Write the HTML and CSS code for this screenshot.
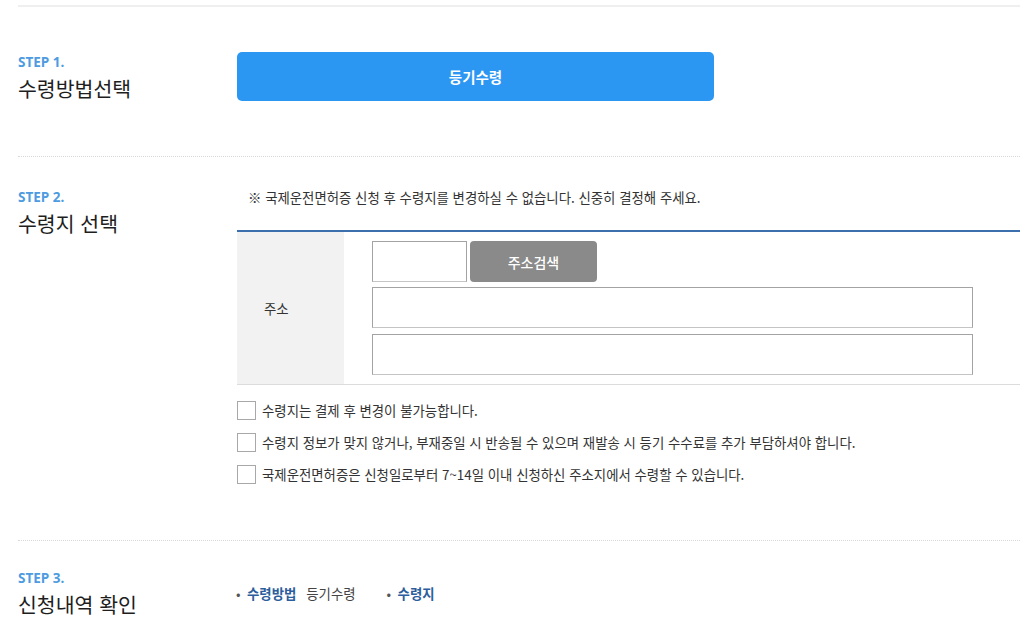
FILE: index.html
```html
<!DOCTYPE html>
<html lang="ko">
<head>
<meta charset="utf-8">
<title>국제운전면허증 신청</title>
<link rel="stylesheet" href="styles.css">
</head>
<body>
<div class="page">
  <section class="step step-first">
    <div class="step-head">
      <div class="step-no">STEP 1.</div>
      <h2 class="step-title">수령방법선택</h2>
    </div>
    <div class="step-body">
      <button class="method-btn" type="button">등기수령</button>
    </div>
  </section>

  <section class="step step-second">
    <div class="step-head">
      <div class="step-no">STEP 2.</div>
      <h2 class="step-title">수령지 선택</h2>
    </div>
    <div class="step-body">
      <p class="notice">※ 국제운전면허증 신청 후 수령지를 변경하실 수 없습니다. 신중히 결정해 주세요.</p>
      <div class="addr-table">
        <div class="addr-label">주소</div>
        <div class="addr-fields">
          <div class="zip-row">
            <input class="input zip" type="text">
            <button class="search-btn" type="button">주소검색</button>
          </div>
          <input class="input wide" type="text">
          <input class="input wide" type="text">
        </div>
      </div>
      <ul class="agree-list">
        <li class="agree"><span class="box"></span>수령지는 결제 후 변경이 불가능합니다.</li>
        <li class="agree"><span class="box"></span>수령지 정보가 맞지 않거나, 부재중일 시 반송될 수 있으며 재발송 시 등기 수수료를 추가 부담하셔야 합니다.</li>
        <li class="agree"><span class="box"></span>국제운전면허증은 신청일로부터 7~14일 이내 신청하신 주소지에서 수령할 수 있습니다.</li>
      </ul>
    </div>
  </section>

  <section class="step step-third">
    <div class="step-head">
      <div class="step-no">STEP 3.</div>
      <h2 class="step-title">신청내역 확인</h2>
    </div>
    <div class="step-body summary-body">
      <ul class="summary">
        <li class="summary-item"><span class="bullet">•</span><strong class="s-key">수령방법</strong><span class="s-val">등기수령</span></li>
        <li class="summary-item"><span class="bullet">•</span><strong class="s-key">수령지</strong></li>
      </ul>
    </div>
  </section>
</div>
</body>
</html>
```

FILE: styles.css
```css
* { box-sizing: border-box; }
html, body { margin: 0; padding: 0; background: #fff; }
body {
  font-family: "Noto Sans CJK KR", "Noto Sans", sans-serif;
  color: #333;
  width: 1024px;
  height: 638px;
  overflow: hidden;
}
.page {
  padding: 5px 4px 0 18px;
}
.step {
  display: flex;
}
.step-first {
  border-top: 2px solid #efefef;
  padding: 45px 0 55px;
  border-bottom: 1px dotted #d8d8d8;
}
.step-second {
  padding: 32px 0 50px;
  border-bottom: 1px dotted #d8d8d8;
}
.step-third {
  padding: 29px 0 0;
}
.step-head {
  width: 219px;
  flex: none;
}
.step-first .step-head { padding-top: 2px; }
.step-no {
  font-family: "Open Sans", "Noto Sans", sans-serif;
  font-weight: 700;
  font-size: 13.5px;
  line-height: 16px;
  color: #4d9be0;
}
.step-title {
  margin: 5px 0 0;
  font-size: 20.5px;
  line-height: 26px;
  font-weight: 400;
  color: #1e1e1e;
}
.step-body { flex: 1; }

.method-btn {
  display: block;
  width: 477px;
  height: 49px;
  border: 0;
  border-radius: 5px;
  background: #2c96f3;
  color: #fff;
  font-family: inherit;
  font-size: 14.5px;
  font-weight: 700;
  cursor: pointer;
}

.notice {
  margin: 0 0 25px 11px;
  font-size: 13.4px;
  line-height: 16px;
  color: #333;
}
.addr-table {
  display: flex;
  border-top: 2px solid #3b6fae;
  border-bottom: 1px solid #dcdcdc;
}
.addr-label {
  width: 107px;
  flex: none;
  background: #f2f2f2;
  padding-left: 27px;
  display: flex;
  align-items: center;
  font-size: 13.4px;
  color: #333;
}
.addr-fields {
  padding: 9px 0 9px 28px;
  display: flex;
  flex-direction: column;
  gap: 5px;
}
.zip-row {
  display: flex;
  gap: 3px;
}
.input {
  display: block;
  height: 41px;
  border: 1px solid #a3a3a3;
  border-bottom-color: #c4c4c4;
  background: #fff;
  margin: 0;
  padding: 0 8px;
  font-family: inherit;
}
.zip { width: 95px; }
.wide { width: 601px; }
.wide + .wide { margin-top: 1px; }
.search-btn {
  width: 127px;
  height: 41px;
  border: 0;
  border-radius: 4px;
  background: #8a8a8a;
  color: #fff;
  font-family: inherit;
  font-size: 14px;
  font-weight: 500;
}

.agree-list {
  list-style: none;
  margin: 9px 0 0;
  padding: 0;
}
.agree {
  height: 32px;
  display: flex;
  align-items: center;
  font-size: 13.4px;
  color: #333;
}
.box {
  width: 19px;
  height: 19px;
  border: 1px solid #a8a8a8;
  background: #fff;
  margin-right: 6px;
  flex: none;
}

.summary-body { padding-top: 15px; }
.summary {
  list-style: none;
  margin: 0;
  padding: 0;
  display: flex;
  gap: 32px;
  font-size: 13.4px;
  line-height: 16px;
}
.summary-item { display: flex; }
.bullet {
  color: #555;
  width: 11px;
  margin-left: -1px;
}
.s-key {
  color: #2c5d9c;
  font-weight: 700;
}
.s-val {
  margin-left: 10px;
  color: #444;
}
```
